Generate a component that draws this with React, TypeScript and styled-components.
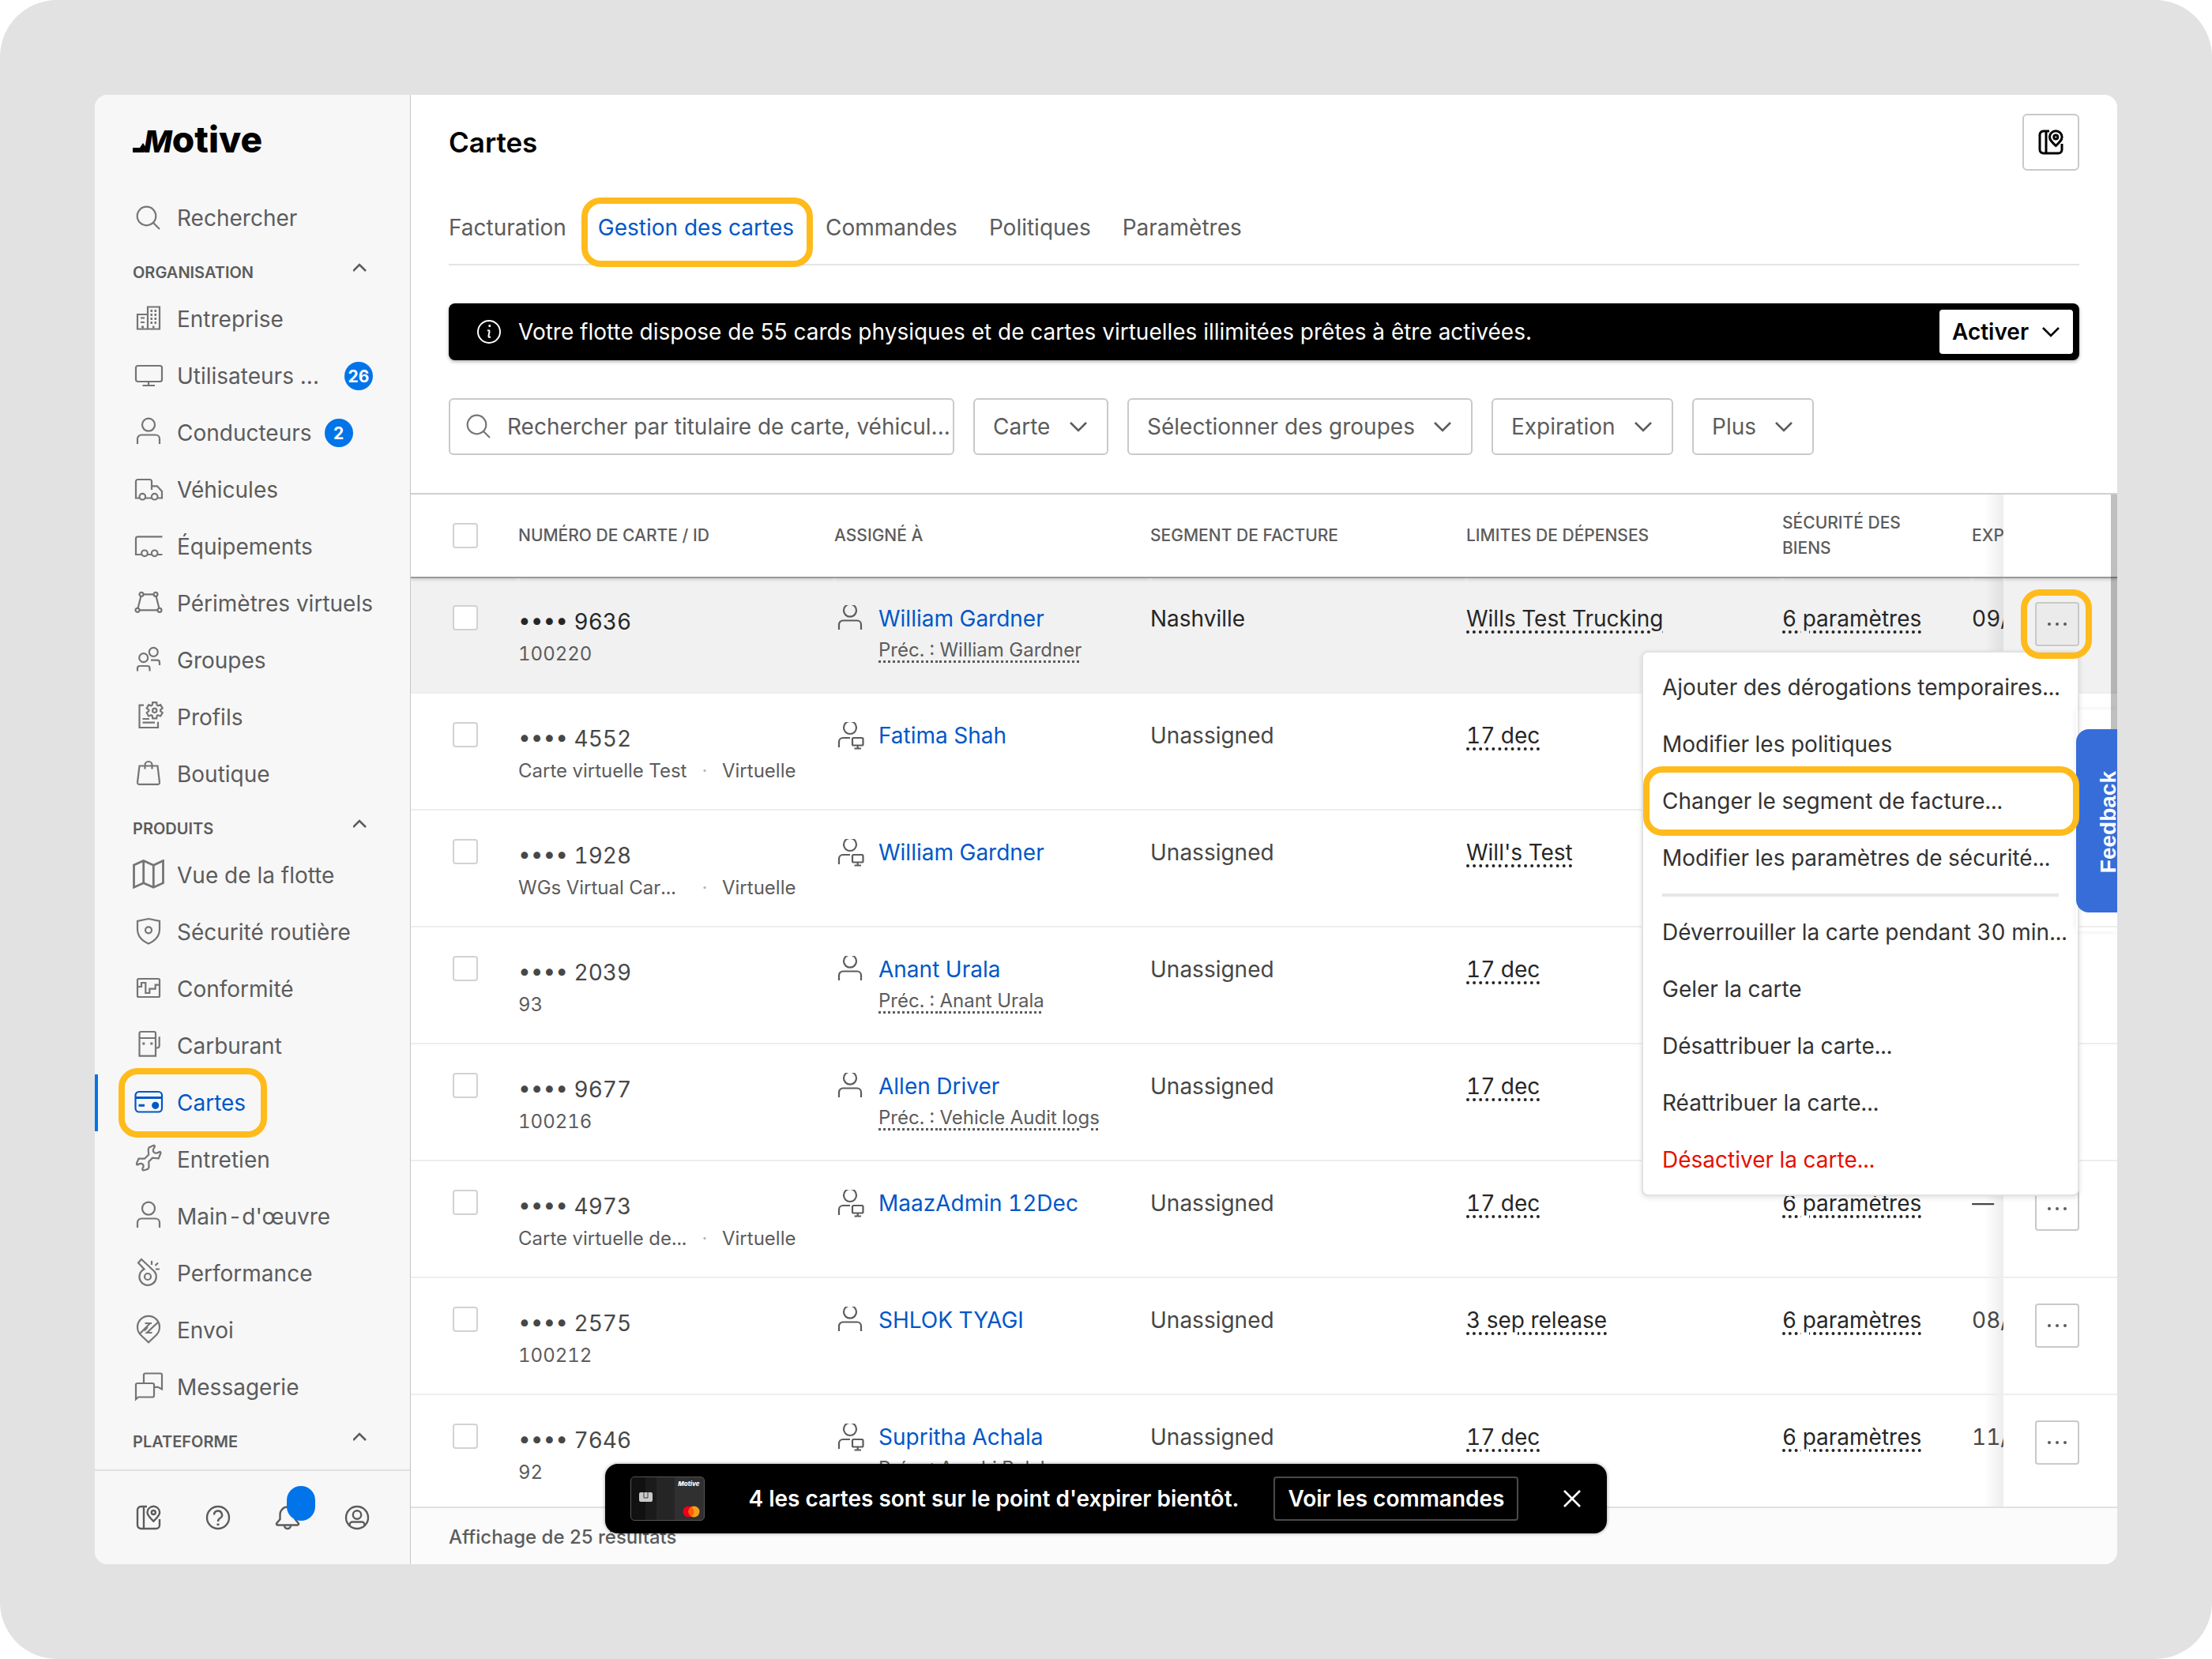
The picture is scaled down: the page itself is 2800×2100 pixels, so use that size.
import React from "react";
import styled, { createGlobalStyle, css } from "styled-components";

const GlobalStyle = createGlobalStyle`
  *, *::before, *::after { box-sizing: border-box; }
  html, body { margin: 0; background: #ffffff; }
  body { font-family: Inter, "Liberation Sans", sans-serif; font-size: 28px; color: #3d3d3d; }
  button, input, select { font: inherit; color: inherit; }
  a { color: inherit; text-decoration: none; }
`;

/* ---------- shell ---------- */

const Page = styled.div`
  height: 100vh;
  padding: 120px;
  border-radius: 72px;
  background: #e2e2e2;
`;

const Window = styled.div`
  position: relative;
  display: flex;
  height: 100%;
  border-radius: 16px;
  overflow: hidden;
  background: #ffffff;
`;

const Callout = styled.span<{ $inset: string }>`
  position: absolute;
  z-index: 3;
  inset: ${(p) => p.$inset};
  border: 8px solid #ffbb1c;
  border-radius: 24px;
  pointer-events: none;
`;

/* ---------- sidebar ---------- */

const Sidebar = styled.aside`
  display: flex;
  flex-direction: column;
  flex: 0 0 400px;
  min-width: 0;
  border-right: 1px solid #c6c6c6;
  background: #f7f7f7;
  color: #5c5c5c;
`;

const Logo = styled.div`
  display: flex;
  align-items: baseline;
  height: 120px;
  padding: 28px 48px 0;
  font-weight: 800;
  line-height: 56px;
  color: #000000;
`;

const LogoInitial = styled.span`
  font-size: 38px;
  font-style: italic;
`;

const LogoRest = styled.span`
  font-size: 46px;
`;

const LogoTail = styled.svg`
  width: 14px;
  height: 28px;
  overflow: visible;
`;

const NavScroll = styled.nav`
  flex: 1;
  min-height: 0;
  overflow: hidden;
`;

const NavItem = styled.a<{ $active?: boolean }>`
  position: relative;
  display: flex;
  align-items: center;
  gap: 16px;
  height: 72px;
  padding: 0 47px 0 48px;
  white-space: nowrap;
  ${(p) =>
    p.$active &&
    css`
      color: #0057c8;
      box-shadow: inset 4px 0 0 #0074e8;
    `}
`;

const NavIcon = styled.svg<{ $active?: boolean }>`
  flex: none;
  width: 40px;
  height: 40px;
  fill: none;
  stroke: ${(p) => (p.$active ? "#0057c8" : "#757575")};
  stroke-width: 2.2;
`;

const CountBadge = styled.span<{ $end?: boolean }>`
  display: grid;
  place-items: center;
  width: 36px;
  height: 36px;
  margin-left: ${(p) => (p.$end ? "auto" : "0")};
  border-radius: 18px;
  background: #0074e8;
  color: #ffffff;
  font-size: 21px;
  font-weight: 700;
`;

const SectionHead = styled.button`
  display: flex;
  justify-content: space-between;
  width: 100%;
  height: 56px;
  padding: 19px 48px 0;
  border: 0;
  background: none;
  font-size: 20px;
  font-weight: 600;
  line-height: 28px;
`;

const SidebarFooter = styled.div`
  display: flex;
  align-items: center;
  gap: 48px;
  height: 120px;
  padding: 0 48px;
  border-top: 2px solid #e0e0e0;
`;

const FooterButton = styled.button`
  position: relative;
  width: 40px;
  height: 40px;
  padding: 0;
  border: 0;
  background: none;
`;

const FooterIcon = styled(NavIcon)`
  display: block;
  stroke: #5c5c5c;
  stroke-width: 2.4;
`;

const Alert = styled.span`
  position: absolute;
  left: 19px;
  top: -20px;
  width: 36px;
  height: 44px;
  border-radius: 18px;
  background: #0074e8;
`;

/* ---------- main area ---------- */

const Main = styled.main`
  display: flex;
  flex-direction: column;
  flex: 1;
  min-width: 0;
`;

const Top = styled.div`
  padding: 24px 48px 48px;
`;

const TitleRow = styled.header`
  display: flex;
  align-items: center;
  justify-content: space-between;
`;

const Title = styled.h1`
  margin: 0;
  font-size: 35px;
  font-weight: 600;
  color: #000000;
`;

const SquareButton = styled.button`
  display: grid;
  place-items: center;
  width: 72px;
  height: 72px;
  padding: 0;
  border: 2px solid #c9c9c9;
  border-radius: 6px;
  background: #ffffff;
`;

const SquareIcon = styled(NavIcon)`
  stroke: #000000;
  stroke-width: 3;
`;

const Tabs = styled.nav`
  display: flex;
  gap: 40px;
  padding: 36px 0 10px;
  border-bottom: 2px solid #e4e4e4;
`;

const Tab = styled.a<{ $active?: boolean }>`
  position: relative;
  line-height: 72px;
  color: ${(p) => (p.$active ? "#0057c8" : "#5c5c5c")};
`;

const Banner = styled.section`
  display: flex;
  align-items: center;
  gap: 20px;
  height: 72px;
  margin-top: 48px;
  padding: 0 8px 0 34px;
  border-radius: 8px;
  background: #000000;
  color: #ffffff;
  box-shadow: 0 2px 4px rgba(0, 0, 0, 0.3);
`;

const BannerText = styled.p`
  flex: 1;
  margin: 0;
`;

const BannerIcon = styled.svg`
  width: 34px;
  height: 34px;
  fill: none;
  stroke: #ffffff;
  stroke-width: 2;
`;

const ActivateButton = styled.button`
  display: flex;
  align-items: center;
  gap: 16px;
  height: 56px;
  padding: 0 16px;
  border: 0;
  border-radius: 4px;
  background: #ffffff;
  color: #000000;
  font-weight: 600;
`;

const ChevronSvg = styled.svg`
  flex: none;
  width: 24px;
  height: 16px;
  fill: none;
  stroke: currentColor;
  stroke-width: 2.6;
  pointer-events: none;
`;

const Filters = styled.form`
  display: flex;
  gap: 24px;
  margin-top: 48px;
  color: #5c5c5c;
`;

const field = css`
  display: flex;
  align-items: center;
  height: 72px;
  border: 2px solid #c9c9c9;
  border-radius: 6px;
  background: #ffffff;
`;

const SearchField = styled.label`
  ${field}
  flex: 0 1 640px;
  gap: 16px;
  padding: 0 4px 0 16px;
`;

const SearchInput = styled.input`
  flex: 1;
  min-width: 0;
  padding: 0;
  border: 0;
  outline: 0;
  background: none;
  &::placeholder {
    color: #5c5c5c;
    opacity: 1;
  }
`;

const FilterField = styled.label`
  ${field}
  gap: 23px;
  padding: 0 24px 0 23px;
`;

const FilterSelect = styled.select`
  appearance: none;
  padding: 0;
  border: 0;
  outline: 0;
  background: none;
`;

/* ---------- table ---------- */

const TableViewport = styled.div`
  position: relative;
  flex: 1;
  min-height: 0;
  overflow: hidden;
  border-top: 2px solid #d0d0d0;
`;

const Table = styled.table`
  width: 100%;
  border-spacing: 0;
  table-layout: fixed;
  font-variant-numeric: tabular-nums;
`;

const Col = styled.col<{ $w?: number }>`
  width: ${(p) => (p.$w ? `${p.$w}px` : "auto")};
`;

const Th = styled.th`
  position: relative;
  z-index: 1;
  height: 104px;
  padding: 0;
  background: #ffffff;
  box-shadow: 0 2px 0 #999999, 0 4px 4px rgba(0, 0, 0, 0.15);
  clip-path: inset(0 0 -10px 0);
  font-size: 21px;
  font-weight: 500;
  line-height: 32px;
  text-align: left;
  color: #5c5c5c;
`;

const edgeShade = css`
  overflow: hidden;
  white-space: nowrap;
  background-image: linear-gradient(to left, rgba(0, 0, 0, 0.07), rgba(0, 0, 0, 0) 24px);
`;

const ThEdge = styled(Th)`
  ${edgeShade}
`;

const Row = styled.tr<{ $hover?: boolean }>`
  background: ${(p) => (p.$hover ? "#f1f1f1" : "#ffffff")};
  color: ${(p) => (p.$hover ? "#262626" : "#474747")};
`;

const Td = styled.td`
  height: 148px;
  padding: 36px 0 0;
  border-bottom: 2px solid #eeeeee;
  vertical-align: top;
  line-height: 34px;
`;

const TdEdge = styled(Td)`
  ${edgeShade}
`;

const TdActions = styled(Td)`
  padding: 32px 48px 0 0;
`;

const CheckCell = styled.div`
  display: flex;
  padding-left: 53px;
`;

const Checkbox = styled.input`
  appearance: none;
  width: 32px;
  height: 32px;
  margin: 0;
  border: 2px solid #d2d2d2;
  border-radius: 4px;
  background: #ffffff;
`;

const CardNumber = styled.div`
  line-height: 42px;
`;

const CardMeta = styled.div`
  display: flex;
  font-size: 24px;
  line-height: 40px;
  color: #5c5c5c;
`;

const CardLabel = styled.span<{ $fixed?: boolean }>`
  min-width: ${(p) => (p.$fixed ? "214px" : "0")};
`;

const Dot = styled.span`
  width: 44px;
  text-align: center;
  color: #b5b5b5;
`;

const Assignee = styled.div`
  display: flex;
  gap: 16px;
`;

const AssigneeIcon = styled.svg`
  flex: none;
  width: 40px;
  height: 40px;
  fill: none;
  stroke: #5c5c5c;
  stroke-width: 2.2;
`;

const NameLink = styled.a`
  display: block;
  color: #0057c8;
`;

const Dotted = styled.span<{ $muted?: boolean }>`
  font-size: ${(p) => (p.$muted ? "24px" : "28px")};
  line-height: ${(p) => (p.$muted ? "46px" : "34px")};
  color: ${(p) => (p.$muted ? "#5c5c5c" : "#262626")};
  text-decoration: underline dotted;
  text-decoration-thickness: ${(p) => (p.$muted ? "3px" : "4px")};
  text-underline-offset: 5px;
`;

const ActionSlot = styled.div<{ $open?: boolean }>`
  position: ${(p) => (p.$open ? "relative" : "static")};
  width: 56px;
  margin-left: auto;
`;

const MoreButton = styled.button<{ $open?: boolean }>`
  display: grid;
  place-items: center;
  width: 56px;
  height: 56px;
  padding: 0;
  border: 2px solid #c9c9c9;
  border-radius: 4px;
  background: ${(p) => (p.$open ? "#ebebeb" : "#ffffff")};
`;

const MoreDots = styled.svg`
  width: 26px;
  height: 6px;
  fill: #5c5c5c;
`;

const Menu = styled.div`
  position: absolute;
  right: 0;
  top: 62px;
  width: 554px;
  padding: 8px 0;
  border: 2px solid #e2e2e2;
  border-radius: 8px;
  background: #ffffff;
  box-shadow: 0 2px 6px rgba(0, 0, 0, 0.12);
`;

const MenuItem = styled.button<{ $danger?: boolean }>`
  position: relative;
  display: block;
  width: 100%;
  height: 72px;
  padding: 0 24px;
  border: 0;
  background: none;
  text-align: left;
  white-space: nowrap;
  color: ${(p) => (p.$danger ? "#e81000" : "#333333")};
`;

const MenuRule = styled.hr`
  height: 4px;
  margin: 9px 24px;
  border: 0;
  background: #e6e6e6;
`;

const ScrollThumb = styled.div`
  position: absolute;
  right: 0;
  top: 0;
  z-index: 1;
  width: 8px;
  height: 400px;
  background: rgba(0, 0, 0, 0.25);
`;

const TableFooter = styled.footer`
  height: 73px;
  padding: 0 48px;
  border-top: 2px solid #e0e0e0;
  background: #fbfbfb;
  font-size: 24px;
  font-weight: 500;
  line-height: 74px;
  color: #5c5c5c;
`;

/* ---------- overlays ---------- */

const FeedbackShell = styled.div`
  position: absolute;
  z-index: 2;
  right: 0;
  top: 778px;
  padding: 25px 0 24px;
  box-shadow: 0 0 8px rgba(0, 0, 0, 0.08);
`;

const FeedbackButton = styled.button`
  display: flex;
  align-items: center;
  justify-content: center;
  width: 52px;
  height: 232px;
  padding: 4px 0 0 30px;
  border: 0;
  border-radius: 16px 0 0 16px;
  background: #366dd8;
  color: #ffffff;
  font-family: "Liberation Sans", Arial, sans-serif;
  font-size: 28px;
  font-weight: 700;
`;

const FeedbackText = styled.span`
  writing-mode: vertical-rl;
  rotate: 180deg;
`;

const Toast = styled.div`
  position: absolute;
  z-index: 4;
  left: 0;
  right: 0;
  bottom: 39px;
  display: flex;
  align-items: center;
  width: max-content;
  height: 88px;
  margin: 0 auto;
  padding: 0 32px;
  border-radius: 16px;
  background: #000000;
  color: #ffffff;
  font-weight: 600;
  box-shadow: 0 0 4px rgba(0, 0, 0, 0.4);
`;

const BankCard = styled.div`
  display: flex;
  flex-direction: column;
  align-items: flex-end;
  justify-content: space-between;
  width: 94px;
  height: 56px;
  padding: 2px 5px 3px;
  border: 1px solid #555555;
  border-radius: 5px;
  background: linear-gradient(to right, #111111 0 20%, #1b1b1b 20% 35%, #252525 35% 60%, #303030 60%);
`;

const BankBrand = styled.span`
  font-size: 8px;
  font-style: italic;
  font-weight: 800;
  line-height: 12px;
`;

const Chip = styled.svg`
  align-self: flex-start;
  margin-left: 5px;
  width: 17px;
  height: 12px;
`;

const BankRings = styled.svg`
  width: 22px;
  height: 15px;
`;

const ToastText = styled.p`
  margin: 0 44px 0 56px;
`;

const ToastButton = styled.button`
  height: 56px;
  padding: 0 16px;
  border: 2px solid #4a4a4a;
  border-radius: 4px;
  background: none;
  color: #ffffff;
  font-weight: 600;
`;

const CloseButton = styled.button`
  display: grid;
  width: 24px;
  height: 24px;
  margin-left: 56px;
  padding: 0;
  border: 0;
  background: none;
`;

const CloseIcon = styled.svg`
  width: 24px;
  height: 24px;
  fill: none;
  stroke: #ffffff;
  stroke-width: 2.6;
`;

/* ---------- icon drawings, on a 40 unit grid ---------- */

const gear = (() => {
  const points: string[] = [];
  for (let i = 0; i < 6; i++) {
    const a = (i * Math.PI) / 3 - Math.PI / 2;
    const at = (r: number, d: number) =>
      `${(27.7 + r * Math.cos(a + d)).toFixed(2)} ${(11.3 + r * Math.sin(a + d)).toFixed(2)}`;
    points.push(at(7.4, -0.42), at(10.4, -0.24), at(10.4, 0.24), at(7.4, 0.42));
  }
  return `M${points.join("L")}Z`;
})();

const personShape = (
  <>
    <circle cx="20" cy="9.7" r="8" />
    <path d="M6 34V27.5a5 5 0 0 1 5-5H29a5 5 0 0 1 5 5V34" />
  </>
);

const mapBookShape = (
  <>
    <path d="M18 6H10.5a4.500 4.500 0 0 0-4.500 4.500V29.500a4.500 4.500 0 0 0 4.500 4.500H29.500a4.500 4.500 0 0 0 4.500-4.500V22M14 6V34" />
    <path d="M26.300 24.500C22 20.500 18.500 17.500 18.500 13.500a7.800 7.800 0 0 1 15.600 0C34.100 17.500 30.600 20.500 26.300 24.500Z" />
    <circle cx="26.300" cy="13.500" r="2.500" />
  </>
);

const icons: Record<string, React.ReactNode> = {
  search: (
    <>
      <circle cx="17.500" cy="17.500" r="11.800" />
      <path d="M26 26L34 34" />
    </>
  ),
  building: (
    <>
      <path d="M19 4.500H34V32.500H19ZM19 14H6V32.500H19" />
      <path strokeWidth="3" d="M22.500 9.500h2.500M27.500 9.500h2.500M22.500 14.500h2.500M27.500 14.500h2.500M22.500 19.500h2.500M27.500 19.500h2.500M22.500 24.500h2.500M27.500 24.500h2.500M25 30h2.500M11 30h3" />
      <path d="M10 18.500h5M10 24h5" />
    </>
  ),
  monitor: (
    <>
      <rect x="4" y="7" width="33" height="20" rx="2.500" />
      <path d="M20 27V32M12.500 32H28" />
    </>
  ),
  person: personShape,
  truck: (
    <>
      <path d="M8 30.500H4V9.500a2.500 2.500 0 0 1 2.500-2.500H21.500a2.500 2.500 0 0 1 2.500 2.500V20M24 15.300H31L37 22V30.500H32M16 30.500H24" />
      <circle cx="12.300" cy="28.700" r="3.800" />
      <circle cx="27.700" cy="28.700" r="3.800" />
    </>
  ),
  trailer: (
    <>
      <path d="M37.500 7.300H6.500A2.500 2.500 0 0 0 4 9.800V30H11M19 30H24M31.500 30H37.500" />
      <circle cx="15" cy="28.300" r="3.800" />
      <circle cx="27.700" cy="28.300" r="3.800" />
    </>
  ),
  fence: (
    <>
      <circle cx="11" cy="8.300" r="2.500" />
      <circle cx="29" cy="8.300" r="2.500" />
      <circle cx="6" cy="28.300" r="2.500" />
      <circle cx="34" cy="28.300" r="2.500" />
      <path d="M13.500 8.300H26.500M8.500 28.300H31.500M10.400 10.800L6.600 25.800M29.600 10.800L33.400 25.800" />
    </>
  ),
  groups: (
    <>
      <circle cx="13.700" cy="16.700" r="5.500" />
      <circle cx="26.300" cy="9.300" r="5.500" />
      <path d="M6 33.500V30a3 3 0 0 1 3-3H18.500a3 3 0 0 1 3 3V33.500M23 19.700H31a3 3 0 0 1 3 3V26" />
    </>
  ),
  profile: (
    <>
      <path d="M14 4.700H8.500V33H32V25.700M12.500 22H21M12.500 26.700H28" />
      <path d={gear} />
      <circle cx="27.700" cy="11.300" r="2.700" />
    </>
  ),
  bag: (
    <>
      <path d="M8.500 9.500H31.500L34 30.500a2 2 0 0 1-2 2.300H8a2 2 0 0 1-2-2.300Z" />
      <path d="M15.500 13.500V8.500a4.500 4.500 0 0 1 9 0V13.500" />
    </>
  ),
  map: (
    <g strokeWidth="2.8">
      <path d="M1.500 7L13.700 1.500L26.300 7.300L38.500 1.500V29.700L26.300 35.200L13.700 29.700L1.500 35.200ZM13.700 1.500V29.700M26.300 7.300V35.200" />
    </g>
  ),
  shield: (
    <>
      <path d="M20 3L34 6V16C34 25 28 31 20 34.500C12 31 6 25 6 16V6Z" />
      <circle cx="20" cy="17.300" r="4" />
    </>
  ),
  log: (
    <>
      <rect x="6" y="7" width="28" height="23" rx="1.500" />
      <path d="M6 17H11V12H16.300V25H21.300V19.700H28.700V14.700H34" />
    </>
  ),
  fuel: (
    <>
      <path d="M8.500 32.700V4a2 2 0 0 1 2-2H27a2 2 0 0 1 2 2V32.700ZM8.500 10H29M33.700 8.300V19.500a3 3 0 0 1-3 3H29" />
      <path strokeWidth="3" d="M12.300 17h3M22.300 17h3" />
    </>
  ),
  card: (
    <>
      <rect x="3.500" y="6" width="33.500" height="25.500" rx="4.500" />
      <path strokeWidth="3" d="M3.500 13.500H37M7.500 23.300H15" />
      <circle cx="28.700" cy="23.300" r="3.500" fill="#0057c8" />
    </>
  ),
  wrench: (
    <path d="M26.800 1.800L20.500 4.500L19.700 7.500L20.200 13.500L15 18.700L7.500 18.500L5 24.500Q4.500 27.500 7.300 25.700Q10.500 23.800 12.700 25.800Q14.700 28 12.500 31Q11.500 34 14.500 33.200L19.300 31.800L20.500 29.500L20.300 22.500L25 17.700L32.700 18.300L35.500 11.500Q35.500 9 33 10.500Q29.500 12.500 27 10.800Q24.700 8.500 27 5Q29 2.500 26.800 1.800Z" />
  ),
  whistle: (
    <>
      <path d="M11 2L7 6.500L14.500 14.500A10.700 10.700 0 1 0 27.500 17.500ZM24 4V9M28.500 10L32 6.500M29 14.500H34" />
      <circle cx="19" cy="24" r="4" />
    </>
  ),
  dispatch: (
    <>
      <path d="M20 35.300L9.800 25.500A14 14 0 1 1 30.200 25.500Z" />
      <path d="M9 24.300L22 11M15.500 11H24M32.300 9.500L18 23H24.500M14.500 20.500L19 16" />
    </>
  ),
  chat: (
    <>
      <path d="M14 14V4.500a2 2 0 0 1 2-2H35a2 2 0 0 1 2 2V22.500L32 19.800H27" />
      <path d="M4 35.300V17a2 2 0 0 1 2-2H25a2 2 0 0 1 2 2V30.500a2 2 0 0 1-2 2H7Z" />
    </>
  ),
  mapBook: mapBookShape,
  help: (
    <>
      <circle cx="20" cy="20" r="14" />
      <path d="M15 16.500a5 5 0 1 1 7.500 4.300C20.700 21.800 20 22.500 20 25" />
      <path strokeWidth="3" d="M20 27.500V30" />
    </>
  ),
  bell: (
    <>
      <path d="M20 6.500a9.500 9.500 0 0 0-9.500 9.500V22L6 27.500Q6 29.500 8 29.500H32Q34 29.500 34 27.500L29.500 22V16A9.500 9.500 0 0 0 20 6.500Z" />
      <path d="M16 30a4 4 0 0 0 8 0" />
    </>
  ),
  account: (
    <>
      <circle cx="20" cy="20" r="14" />
      <circle cx="20" cy="16.500" r="5.200" />
      <path d="M10.500 30.500V29a3.500 3.500 0 0 1 3.500-3.500H26a3.500 3.500 0 0 1 3.500 3.500V30.500" />
    </>
  ),
};

const Chevron = ({ up }: { up?: boolean }) => (
  <ChevronSvg viewBox="0 0 24 16" aria-hidden="true">
    <path d={up ? "M0 12L8 4L16 12" : "M2 3L12 13L22 3"} />
  </ChevronSvg>
);

/* ---------- data ---------- */

type Item = { icon: string; label: string; count?: string; end?: boolean; active?: boolean };

const sections: { title: string; items: Item[] }[] = [
  {
    title: "ORGANISATION",
    items: [
      { icon: "building", label: "Entreprise" },
      { icon: "monitor", label: "Utilisateurs ...", count: "26", end: true },
      { icon: "person", label: "Conducteurs", count: "2" },
      { icon: "truck", label: "Véhicules" },
      { icon: "trailer", label: "Équipements" },
      { icon: "fence", label: "Périmètres virtuels" },
      { icon: "groups", label: "Groupes" },
      { icon: "profile", label: "Profils" },
      { icon: "bag", label: "Boutique" },
    ],
  },
  {
    title: "PRODUITS",
    items: [
      { icon: "map", label: "Vue de la flotte" },
      { icon: "shield", label: "Sécurité routière" },
      { icon: "log", label: "Conformité" },
      { icon: "fuel", label: "Carburant" },
      { icon: "card", label: "Cartes", active: true },
      { icon: "wrench", label: "Entretien" },
      { icon: "person", label: "Main\u200A-\u200Ad'œuvre" },
      { icon: "whistle", label: "Performance" },
      { icon: "dispatch", label: "Envoi" },
      { icon: "chat", label: "Messagerie" },
    ],
  },
  { title: "PLATEFORME", items: [] },
];

const footerActions = [
  { icon: "mapBook", label: "Guide" },
  { icon: "help", label: "Aide" },
  { icon: "bell", label: "Notifications", alert: true },
  { icon: "account", label: "Compte" },
];

type CardRow = {
  digits: string;
  id: string;
  virtual?: boolean;
  admin?: boolean;
  name: string;
  previous?: string;
  segment: string;
  limit: string;
  security: string;
  expiry: string;
  open?: boolean;
};

const rows: CardRow[] = [
  { digits: "9636", id: "100220", name: "William Gardner", previous: "William Gardner", segment: "Nashville", limit: "Wills Test Trucking", security: "6 paramètres", expiry: "09/", open: true },
  { digits: "4552", id: "Carte virtuelle Test", virtual: true, admin: true, name: "Fatima Shah", segment: "Unassigned", limit: "17 dec", security: "", expiry: "" },
  { digits: "1928", id: "WGs Virtual Car...", virtual: true, admin: true, name: "William Gardner", segment: "Unassigned", limit: "Will's Test", security: "", expiry: "" },
  { digits: "2039", id: "93", name: "Anant Urala", previous: "Anant Urala", segment: "Unassigned", limit: "17 dec", security: "", expiry: "" },
  { digits: "9677", id: "100216", name: "Allen Driver", previous: "Vehicle Audit logs", segment: "Unassigned", limit: "17 dec", security: "", expiry: "" },
  { digits: "4973", id: "Carte virtuelle de...", virtual: true, admin: true, name: "MaazAdmin 12Dec", segment: "Unassigned", limit: "17 dec", security: "6 paramètres", expiry: "—" },
  { digits: "2575", id: "100212", name: "SHLOK TYAGI", segment: "Unassigned", limit: "3 sep release", security: "6 paramètres", expiry: "08/" },
  { digits: "7646", id: "92", admin: true, name: "Supritha Achala", previous: "Arushi Balala", segment: "Unassigned", limit: "17 dec", security: "6 paramètres", expiry: "11/" },
];

const filters = ["Carte", "Sélectionner des groupes", "Expiration", "Plus"];
const tabs = ["Facturation", "Gestion des cartes", "Commandes", "Politiques", "Paramètres"];

/* ---------- parts ---------- */

const SidebarNav = () => (
  <Sidebar>
    <Logo>
      <LogoTail viewBox="0 0 14 28" aria-hidden="true">
        <path d="M0 22H9L13 16L17 22L14 28H0Z" fill="#000000" />
      </LogoTail>
      <LogoInitial>M</LogoInitial>
      <LogoRest>otive</LogoRest>
    </Logo>
    <NavScroll>
      <NavItem href="#rechercher">
        <NavIcon viewBox="0 0 40 40" aria-hidden="true">{icons.search}</NavIcon>
        Rechercher
      </NavItem>
      {sections.map((section) => (
        <div key={section.title}>
          <SectionHead type="button">
            {section.title}
            <Chevron up />
          </SectionHead>
          {section.items.map((item) => (
            <NavItem key={item.label} href="#nav" $active={item.active}>
              <NavIcon viewBox="0 0 40 40" aria-hidden="true" $active={item.active}>
                {icons[item.icon]}
              </NavIcon>
              <span>{item.label}</span>
              {item.count && <CountBadge $end={item.end}>{item.count}</CountBadge>}
              {item.active && <Callout $inset="-8px 181px -8px 30px" />}
            </NavItem>
          ))}
        </div>
      ))}
    </NavScroll>
    <SidebarFooter>
      {footerActions.map((action) => (
        <FooterButton key={action.icon} type="button" aria-label={action.label}>
          <FooterIcon viewBox="0 0 40 40" aria-hidden="true">{icons[action.icon]}</FooterIcon>
          {action.alert && <Alert />}
        </FooterButton>
      ))}
    </SidebarFooter>
  </Sidebar>
);

const RowMenu = () => (
  <Menu role="menu">
    <MenuItem role="menuitem">Ajouter des dérogations temporaires...</MenuItem>
    <MenuItem role="menuitem">Modifier les politiques</MenuItem>
    <MenuItem role="menuitem">
      Changer le segment de facture...
      <Callout $inset="-8px -2px -8px 0" />
    </MenuItem>
    <MenuItem role="menuitem">Modifier les paramètres de sécurité...</MenuItem>
    <MenuRule />
    <MenuItem role="menuitem">Déverrouiller la carte pendant 30 min...</MenuItem>
    <MenuItem role="menuitem">Geler la carte</MenuItem>
    <MenuItem role="menuitem">Désattribuer la carte...</MenuItem>
    <MenuItem role="menuitem">Réattribuer la carte...</MenuItem>
    <MenuItem role="menuitem" $danger>Désactiver la carte...</MenuItem>
  </Menu>
);

const CardRowView = ({ row }: { row: CardRow }) => (
  <Row $hover={row.open}>
    <Td>
      <CheckCell>
        <Checkbox type="checkbox" aria-label={row.digits} />
      </CheckCell>
    </Td>
    <Td>
      <CardNumber>•••• {row.digits}</CardNumber>
      <CardMeta>
        <CardLabel $fixed={row.virtual}>{row.id}</CardLabel>
        {row.virtual && (
          <>
            <Dot>·</Dot>
            <span>Virtuelle</span>
          </>
        )}
      </CardMeta>
    </Td>
    <Td>
      <Assignee>
        <AssigneeIcon viewBox="0 0 40 40" aria-hidden="true">
          {row.admin ? (
            <>
              <circle cx="20" cy="7" r="8" />
              <path d="M6 32V25a5 5 0 0 1 5-5H20" />
              <rect x="23" y="20" width="13.500" height="9.500" rx="1.500" />
              <path d="M29.700 29.500V33M25.500 33.500H34" />
            </>
          ) : (
            <g transform="translate(0 -3)">{personShape}</g>
          )}
        </AssigneeIcon>
        <div>
          <NameLink href="#titulaire">{row.name}</NameLink>
          {row.previous && <Dotted $muted>Préc. : {row.previous}</Dotted>}
        </div>
      </Assignee>
    </Td>
    <Td>{row.segment}</Td>
    <Td>
      <Dotted>{row.limit}</Dotted>
    </Td>
    <Td>
      <Dotted>{row.security}</Dotted>
    </Td>
    <TdEdge>{row.expiry}</TdEdge>
    <TdActions>
      <ActionSlot $open={row.open}>
        <MoreButton type="button" aria-label="Actions" $open={row.open}>
          <MoreDots viewBox="0 0 26 6" aria-hidden="true">
            <circle cx="3" cy="3" r="2" />
            <circle cx="13" cy="3" r="2" />
            <circle cx="23" cy="3" r="2" />
          </MoreDots>
        </MoreButton>
        {row.open && (
          <>
            <RowMenu />
            <Callout $inset="-16px -16px -16px -18px" />
          </>
        )}
      </ActionSlot>
    </TdActions>
  </Row>
);

export default function App() {
  return (
    <>
      <GlobalStyle />
      <Page>
        <Window>
          <SidebarNav />
          <Main>
            <Top>
              <TitleRow>
                <Title>Cartes</Title>
                <SquareButton type="button" aria-label="Guide">
                  <SquareIcon viewBox="0 0 40 40" aria-hidden="true">{icons.mapBook}</SquareIcon>
                </SquareButton>
              </TitleRow>
              <Tabs>
                {tabs.map((tab, i) => (
                  <Tab key={tab} href="#onglet" $active={i === 1}>
                    {tab}
                    {i === 1 && <Callout $inset="-2px -24px -14px -21px" />}
                  </Tab>
                ))}
              </Tabs>
              <Banner>
                <BannerIcon viewBox="0 0 34 34" aria-hidden="true">
                  <circle cx="17" cy="17" r="14" />
                  <path d="M15 15.500Q18 14.500 17.500 17L16.500 22Q16 24.500 19 23.500" />
                  <path strokeWidth="3" d="M16.500 9.500H19" />
                </BannerIcon>
                <BannerText>
                  Votre flotte dispose de 55 cards physiques et de cartes virtuelles illimitées prêtes à être activées.
                </BannerText>
                <ActivateButton type="button">
                  Activer
                  <Chevron />
                </ActivateButton>
              </Banner>
              <Filters>
                <SearchField>
                  <NavIcon viewBox="0 0 40 40" aria-hidden="true">{icons.search}</NavIcon>
                  <SearchInput
                    type="text"
                    aria-label="Rechercher"
                    placeholder="Rechercher par titulaire de carte, véhicul..."
                  />
                </SearchField>
                {filters.map((filter) => (
                  <FilterField key={filter}>
                    <FilterSelect aria-label={filter}>
                      <option>{filter}</option>
                    </FilterSelect>
                    <Chevron />
                  </FilterField>
                ))}
              </Filters>
            </Top>
            <TableViewport>
              <Table>
                <colgroup>
                  <Col $w={136} />
                  <Col />
                  <Col />
                  <Col />
                  <Col />
                  <Col $w={240} />
                  <Col $w={40} />
                  <Col $w={144} />
                </colgroup>
                <thead>
                  <tr>
                    <Th>
                      <CheckCell>
                        <Checkbox type="checkbox" aria-label="Tout sélectionner" />
                      </CheckCell>
                    </Th>
                    <Th>NUMÉRO DE CARTE / ID</Th>
                    <Th>ASSIGNÉ À</Th>
                    <Th>SEGMENT DE FACTURE</Th>
                    <Th>LIMITES DE DÉPENSES</Th>
                    <Th>
                      SÉCURITÉ DES
                      <br />
                      BIENS
                    </Th>
                    <ThEdge>EXP</ThEdge>
                    <Th />
                  </tr>
                </thead>
                <tbody>
                  {rows.map((row) => (
                    <CardRowView key={row.digits} row={row} />
                  ))}
                </tbody>
              </Table>
              <ScrollThumb />
            </TableViewport>
            <TableFooter>Affichage de 25 résultats</TableFooter>
          </Main>
          <FeedbackShell>
            <FeedbackButton type="button">
              <FeedbackText>Feedback</FeedbackText>
            </FeedbackButton>
          </FeedbackShell>
          <Toast role="status">
            <BankCard>
              <BankBrand>Motive</BankBrand>
              <Chip viewBox="0 0 17 12" aria-hidden="true">
                <rect width="17" height="12" rx="2" fill="#c9c9c9" />
                <path d="M6 0V7M11 0V7M6 7H11" stroke="#3a3a3a" fill="none" />
              </Chip>
              <BankRings viewBox="0 0 22 15" aria-hidden="true">
                <circle cx="7.500" cy="7.500" r="7" fill="#eb001b" />
                <circle cx="14.500" cy="7.500" r="7" fill="#f79e1b" />
                <path d="M11 1.500A7 7 0 0 1 11 13.500A7 7 0 0 1 11 1.500Z" fill="#ff5f00" />
              </BankRings>
            </BankCard>
            <ToastText>4 les cartes sont sur le point d'expirer bientôt.</ToastText>
            <ToastButton type="button">Voir les commandes</ToastButton>
            <CloseButton type="button" aria-label="Fermer">
              <CloseIcon viewBox="0 0 24 24" aria-hidden="true">
                <path d="M2 2L22 22M22 2L2 22" />
              </CloseIcon>
            </CloseButton>
          </Toast>
        </Window>
      </Page>
    </>
  );
}
